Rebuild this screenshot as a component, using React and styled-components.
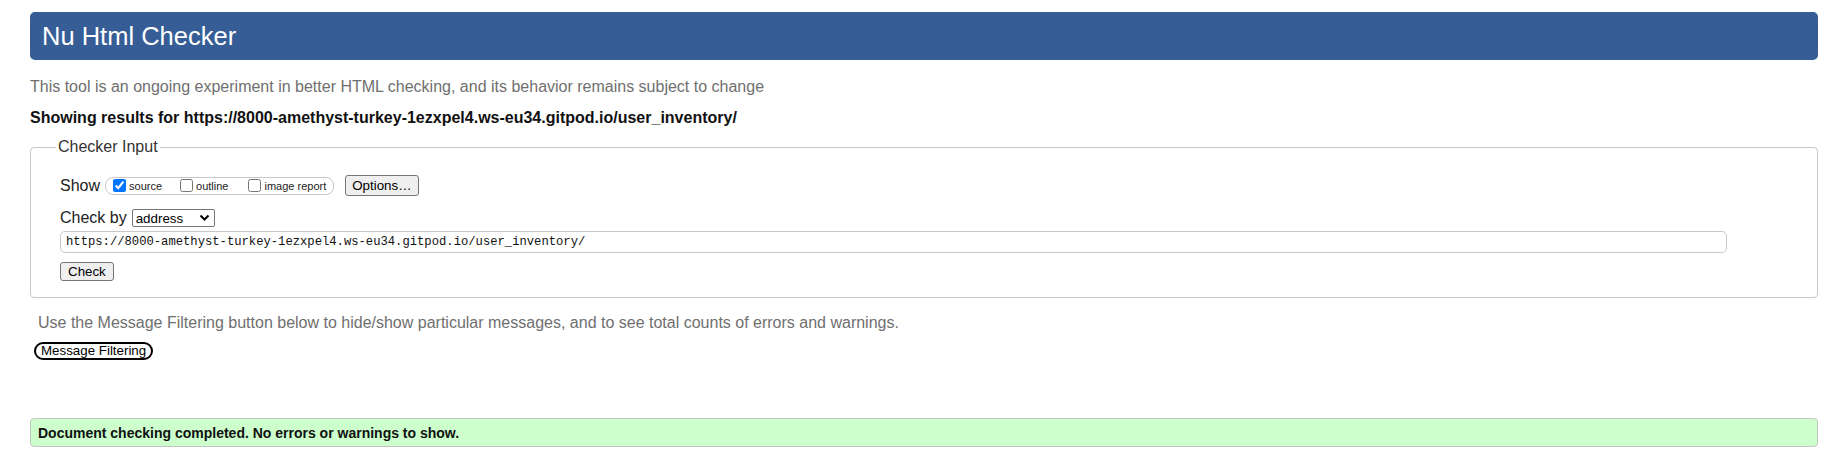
import styled, { createGlobalStyle } from 'styled-components';

const GlobalStyle = createGlobalStyle`
    body {
        margin: 0;
        background: #fff;
        font-family: "Liberation Sans", Arial, sans-serif;
        color: #222;
    }
`;

const Page = styled.div`
    padding: 12px 29px 4px 30px;
`;

const Header = styled.h1`
    margin: 0;
    height: 48px;
    display: flex;
    align-items: center;
    padding-left: 12px;
    background: #365d95;
    color: #fff;
    font-size: 25.5px;
    font-weight: normal;
    border-radius: 5px;
`;

const Intro = styled.p`
    margin: 18px 0 0;
    font-size: 16px;
    line-height: 18px;
    color: #6f6f6f;
`;

const Results = styled.p`
    margin: 13px 0 0;
    font-size: 16px;
    line-height: 18px;
    font-weight: bold;
    color: #111;
`;

const Fieldset = styled.fieldset`
    margin: 11px 0 0;
    padding: 0 29px 16px;
    border: 1px solid #c8c8c8;
    border-radius: 4px;
`;

const Legend = styled.legend`
    margin-left: -4px;
    padding: 0 2px;
    font-size: 16px;
    line-height: 18px;
    color: #333;
`;

const Row = styled.div`
    display: flex;
    align-items: center;
    margin-top: ${({ $top }) => $top}px;
    font-size: 16px;
`;

const Label = styled.span`
    margin-right: 5px;
`;

const Pill = styled.div`
    display: flex;
    align-items: center;
    height: 16px;
    padding: 0 7px 0 3px;
    border: 1px solid #c8c8c8;
    border-radius: 8px;
`;

const Option = styled.label`
    display: flex;
    align-items: center;
    font-size: 11px;
    margin-right: ${({ $gap }) => $gap || 0}px;
    color: #222;

    input {
        margin: 0 3px 0 4px;
        width: 13px;
        height: 13px;
    }
`;

const Button = styled.button`
    font-family: "Liberation Sans", Arial, sans-serif;
    font-size: 13.33px;
    color: #000;
    background: #efefef;
    border: 1px solid #767676;
    border-radius: 3px;
    padding: ${({ $tall }) => ($tall ? '2px 6px' : '1px 7px')};
    margin-left: ${({ $left }) => $left || 0}px;
    line-height: 15px;
`;

const SelectBox = styled.div`
    display: inline-flex;
    align-items: center;
    width: 83px;
    height: 18px;
    box-sizing: border-box;
    border: 1px solid #767676;
    border-radius: 2px;
    background: #fff;

    select {
        appearance: none;
        border: 0;
        background: transparent;
        flex: 1;
        min-width: 0;
        padding: 0 0 0 3px;
        font-family: "Liberation Sans", Arial, sans-serif;
        font-size: 13.33px;
        color: #000;
        outline: none;
    }

    svg {
        margin-right: 4px;
    }
`;

const UrlInput = styled.input`
    display: block;
    box-sizing: border-box;
    width: 1667px;
    height: 22px;
    margin-top: 4px;
    padding: 0 5px;
    border: 1px solid #c8c8c8;
    border-radius: 5px;
    font-family: "Liberation Mono", "DejaVu Sans Mono", monospace;
    font-size: 12.2px;
    color: #111;
`;

const CheckRow = styled.div`
    margin-top: 9px;
    line-height: 0;
`;

const Hint = styled.p`
    margin: 16px 0 0 8px;
    font-size: 16px;
    line-height: 18px;
    color: #6f6f6f;
`;

const FilterButton = styled.button`
    display: block;
    margin: 10px 0 0 4px;
    height: 18px;
    padding: 0 5px;
    background: #fff;
    border: 2px solid #000;
    border-radius: 9px;
    font-family: "Liberation Sans", Arial, sans-serif;
    font-size: 13.33px;
    line-height: 14px;
    color: #000;
`;

const Success = styled.div`
    margin-top: 58px;
    height: 29px;
    box-sizing: border-box;
    display: flex;
    align-items: center;
    padding-left: 7px;
    background: #ccffcc;
    border: 1px solid #c4c4c4;
    border-radius: 4px;
    font-size: 14px;
    font-weight: bold;
    color: #111;
`;

const Chevron = () => (
    <svg width="11" height="8" viewBox="0 0 11 8">
        <path d="M1.5 1.5 L5.5 5.5 L9.5 1.5" fill="none" stroke="#000" strokeWidth="2" />
    </svg>
);

const App = () => {
    const url = 'https://8000-amethyst-turkey-1ezxpel4.ws-eu34.gitpod.io/user_inventory/';

    return (
        <Page>
            <GlobalStyle />
            <Header>Nu Html Checker</Header>
            <Intro>This tool is an ongoing experiment in better HTML checking, and its behavior remains subject to change</Intro>
            <Results>Showing results for {url}</Results>
            <Fieldset>
                <Legend>Checker Input</Legend>
                <Row $top={19}>
                    <Label>Show</Label>
                    <Pill>
                        <Option $gap={14}><input type="checkbox" defaultChecked />source</Option>
                        <Option $gap={16}><input type="checkbox" />outline</Option>
                        <Option><input type="checkbox" />image report</Option>
                    </Pill>
                    <Button $tall $left={11}>Options…</Button>
                </Row>
                <Row $top={13}>
                    <Label>Check by</Label>
                    <SelectBox>
                        <select defaultValue="address">
                            <option value="address">address</option>
                            <option value="file">file upload</option>
                            <option value="text">text input</option>
                        </select>
                        <Chevron />
                    </SelectBox>
                </Row>
                <UrlInput defaultValue={url} />
                <CheckRow>
                    <Button>Check</Button>
                </CheckRow>
            </Fieldset>
            <Hint>Use the Message Filtering button below to hide/show particular messages, and to see total counts of errors and warnings.</Hint>
            <FilterButton>Message Filtering</FilterButton>
            <Success>Document checking completed. No errors or warnings to show.</Success>
        </Page>
    );
};

export default App;
